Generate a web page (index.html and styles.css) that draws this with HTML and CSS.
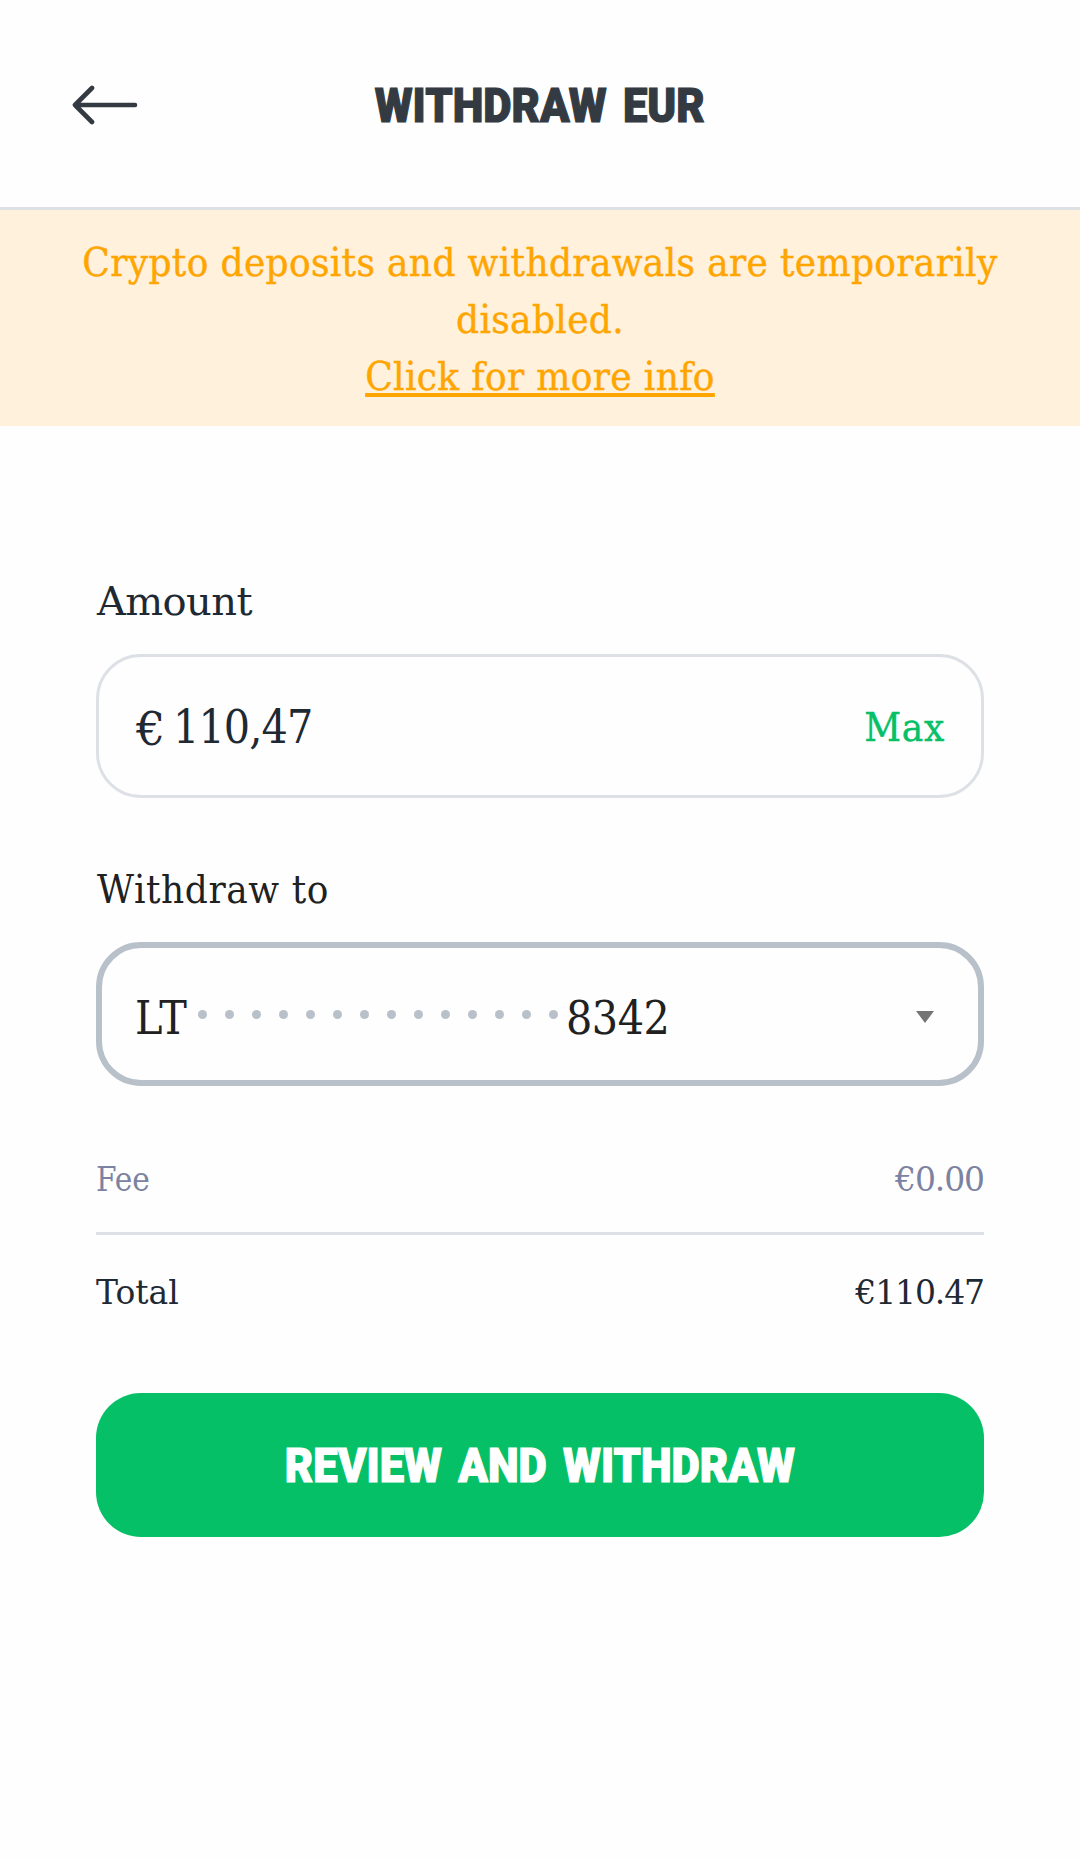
FILE: index.html
```
<!DOCTYPE html>
<html lang="en">
<head>
<meta charset="utf-8">
<title>Withdraw EUR</title>
<link rel="stylesheet" href="styles.css">
</head>
<body>
<header class="header">
  <a class="back" aria-label="Back">
    <svg width="66" height="40" viewBox="0 0 66 40" fill="none" stroke="currentColor" stroke-width="4.6" stroke-linecap="round" stroke-linejoin="round"><path d="M63 20H3M20 3L3 20L20 37"/></svg>
  </a>
  <h1 class="title display">WITHDRAW EUR</h1>
</header>
<div class="banner">
  <p>Crypto deposits and withdrawals are temporarily disabled.</p>
  <a class="banner-link">Click for more info</a>
</div>
<main class="form">
  <div class="label label-amount">Amount</div>
  <div class="field">
    <span class="currency">€</span>
    <span class="amount">110,47</span>
    <span class="max">Max</span>
  </div>
  <div class="label label-account">Withdraw to</div>
  <div class="field field-select">
    <span class="country">LT</span>
    <span class="dots"><i></i><i></i><i></i><i></i><i></i><i></i><i></i><i></i><i></i><i></i><i></i><i></i><i></i><i></i></span>
    <span class="digits">8342</span>
    <svg class="caret" width="18" height="12" viewBox="0 0 18 12"><path fill="#757575" d="M0 0H18L9 12Z"/></svg>
  </div>
  <div class="row row-fee"><span>Fee</span><span class="value">€0.00</span></div>
  <div class="row row-total"><span class="total">Total</span><span class="value">€110.47</span></div>
  <button class="submit"><span class="display">REVIEW AND WITHDRAW</span></button>
</main>
</body>
</html>
```
FILE: styles.css
```
* { box-sizing: border-box; }
body {
  margin: 0;
  min-height: 1860px;
  background: #fefefe;
  color: #1f2933;
  font-family: "DejaVu Serif Condensed", "DejaVu Serif", serif;
  font-size: 40px;
  line-height: 57px;
}
p { margin: 0; }
.display {
  display: inline-block;
  font-family: Roboto, sans-serif;
  font-weight: 900;
  font-size: 48px;
  line-height: 56px;
  word-spacing: 6px;
  transform: scaleX(0.908);
  -webkit-text-stroke: 1.2px currentColor;
  white-space: nowrap;
}
.header {
  height: 210px;
  border-bottom: 3px solid #dde1e6;
  display: grid;
  grid-template-columns: 1fr auto 1fr;
  align-items: center;
  color: #343a42;
}
.back { display: flex; padding: 3px 0 0 72px; }
.title { margin: 0; padding-top: 5px; }
.banner {
  height: 216px;
  padding: 24px 60px 0;
  background: #fff1dc;
  color: #ffa500;
  text-align: center;
  letter-spacing: 0.36px;
  -webkit-text-stroke: 0.4px currentColor;
}
.banner-link {
  text-decoration: underline;
  text-decoration-thickness: 4px;
  text-underline-offset: 3px;
  text-decoration-skip-ink: none;
}
.form { padding: 147px 96px 0; }
.label { margin-bottom: 24px; padding-left: 1px; }
.label-amount { font-family: "DejaVu Serif", serif; letter-spacing: -0.6px; }
.label-account { margin-top: 63px; color: #212121; letter-spacing: 0.6px; }
.field {
  height: 144px;
  border: 3px solid #dde1e6;
  border-radius: 45px;
  display: flex;
  align-items: center;
  padding: 2px 36px 0 37px;
  font-size: 46px;
}
.currency {
  width: 37px;
  padding-top: 5px;
  font-family: "DejaVu Serif", serif;
}
.amount { letter-spacing: -0.9px; }
.max {
  margin-left: auto;
  color: #06c068;
  font-size: 40px;
  letter-spacing: 0.7px;
  -webkit-text-stroke: 0.4px currentColor;
}
.field-select {
  border: 6px solid #b8c0ca;
  padding: 9px 42px 0 33px;
  color: #212121;
}
.country { width: 63px; letter-spacing: 0.5px; }
.dots { display: flex; gap: 18px; margin: 0 8px 8px 0; }
.dots i { width: 9px; height: 9px; border-radius: 50%; background: #b8c0ca; }
.digits { letter-spacing: -0.5px; }
.caret { margin: 0 2px 4px auto; }
.row {
  display: flex;
  justify-content: space-between;
  font-size: 33px;
  line-height: 48px;
}
.row-fee {
  margin-top: 70px;
  padding-bottom: 28px;
  border-bottom: 3px solid #dde1e6;
  color: #7c82a1;
}
.row-total { padding-top: 34px; }
.total { font-family: "DejaVu Serif", serif; }
.value { font-family: "DejaVu Serif", serif; letter-spacing: -1.1px; }
.submit {
  display: flex;
  align-items: center;
  justify-content: center;
  width: 100%;
  height: 144px;
  margin-top: 76px;
  padding: 2px 0 0;
  border: 0;
  border-radius: 45px;
  background: #06c068;
  color: #fff;
}
```
